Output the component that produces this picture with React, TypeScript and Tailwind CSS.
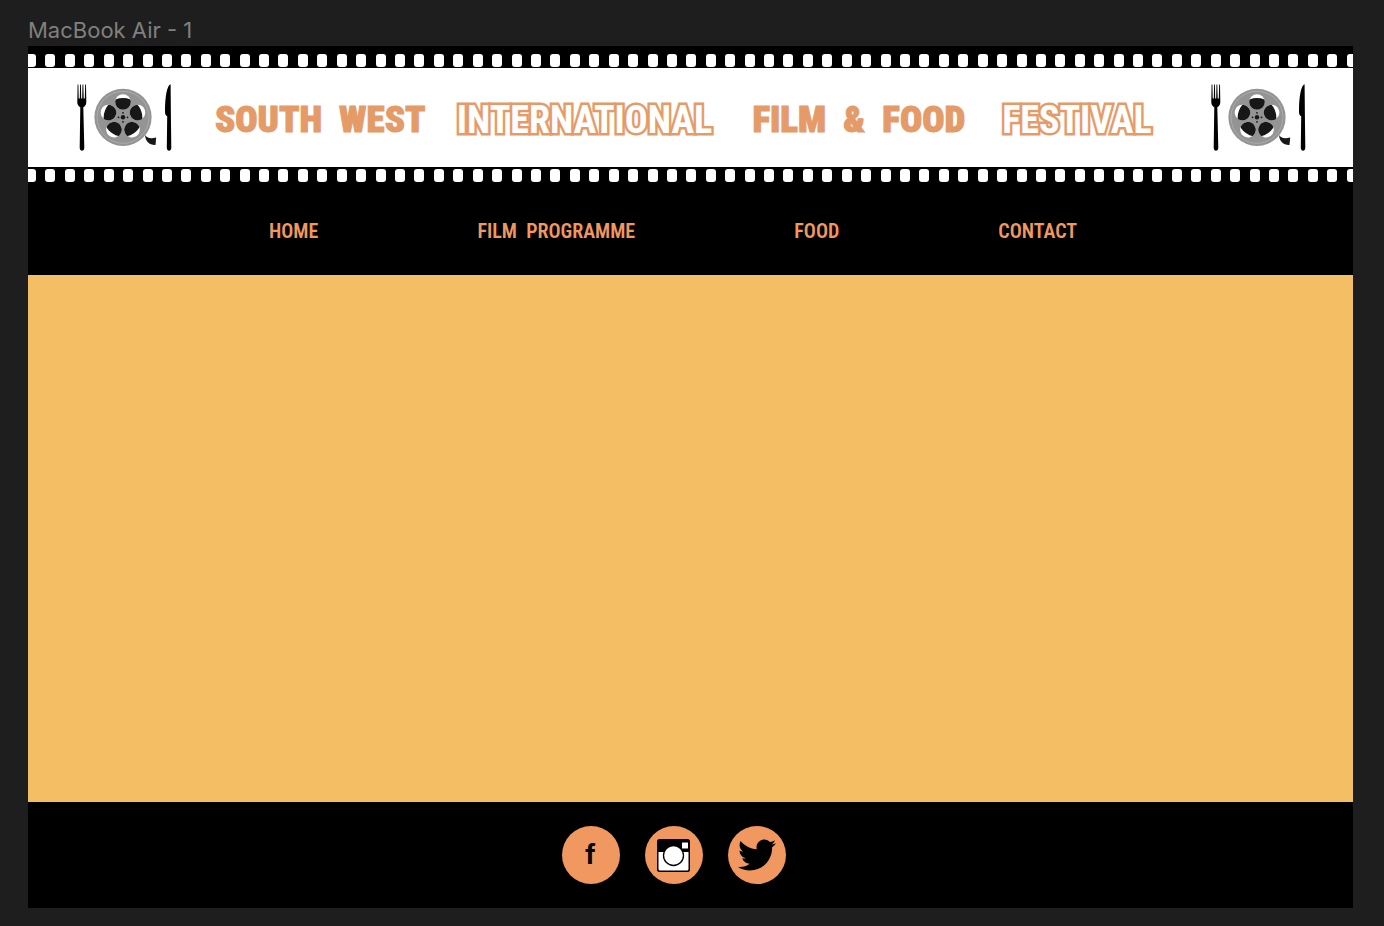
import { useId } from "react";
import { FaTwitter } from "react-icons/fa";

const HOLE_COUNT = 69;
const REEL_ANGLES = [0, 72, 144, 216, 288];
const HUB_ANGLES = [0, 90, 180, 270];

function FilmStrip() {
  return (
    <div className="overflow-hidden" aria-hidden="true">
      <div className="-mr-1 -ml-[2px] flex justify-between">
        {Array.from({ length: HOLE_COUNT }, (_, i) => (
          <span key={i} className="h-[13px] w-[10px] shrink-0 rounded-[3px] bg-white" />
        ))}
      </div>
    </div>
  );
}

function FestivalMark() {
  const clipId = useId();
  return (
    <svg viewBox="0 0 96 68" className="h-[68px] w-24" role="img" aria-label="Fork, film reel and knife">
      <path
        d="M1.600 .5 1.300 18c0 3 1.300 4.200 3 5.200L3.700 63.500c0 4.300 4.600 4.300 4.600 0L7.300 23.200c1.700-1 3-2.200 3-5.200L10 .5h-.8L8.800 14.500H7.700L7.300.5h-.8L6.200 14.500H5.200L4.900.5h-.8L3.800 14.500H2.700L2.400.5z"
        fill="#000"
      />
      <circle cx="47" cy="33.300" r="28.600" fill="#949494" />
      <circle cx="47" cy="33.300" r="26" fill="none" stroke="#ababab" strokeWidth="1" />
      <clipPath id={clipId}>
        <circle cx="47" cy="33.300" r="19.300" />
      </clipPath>
      <g fill="#fff">
        {REEL_ANGLES.map((angle) => (
          <circle key={angle} cx="47" cy="18" r="7.800" transform={`rotate(${angle} 47 33.3)`} />
        ))}
      </g>
      <g fill="#171717" clipPath={`url(#${clipId})`}>
        {REEL_ANGLES.map((angle) => (
          <circle key={angle} cx="47" cy="18" r="7.800" transform={`rotate(${angle} 47 33.3)`} />
        ))}
      </g>
      <circle cx="47" cy="33.300" r="2.200" fill="#171717" />
      <g fill="#171717">
        {HUB_ANGLES.map((angle) => (
          <circle key={angle} cx="47" cy="28.800" r=".9" transform={`rotate(${angle} 47 33.3)`} />
        ))}
      </g>
      <path d="M69 51c1.500 2.700 5.500 4.200 11.200 2.400L79.500 61c-6 .3-10-3.500-10.500-10z" fill="#171717" />
      <path d="M94.600.3c-3.500 1-5.600 12-5.600 27 0 3 .5 4.300 2.200 5L90.800 63.500c0 4.300 4.500 4.300 4.500 0L94.900 32z" fill="#000" />
    </svg>
  );
}

function InstagramIcon() {
  return (
    <svg viewBox="0 0 33 33" className="h-[33px] w-[33px]" aria-hidden="true">
      <rect width="33" height="33" rx="2.500" fill="#000" />
      <path d="M1.500 13h30v17a1.500 1.500 0 0 1-1.500 1.500H3A1.500 1.500 0 0 1 1.500 30z" fill="#fff" />
      <circle cx="16.500" cy="16.500" r="10" fill="#fff" stroke="#000" strokeWidth="1.300" />
      <rect x="25" y="3.500" width="6" height="6" rx=".5" fill="#fff" />
    </svg>
  );
}

const solid = "text-[37px] font-black [-webkit-text-stroke:1px_#e59b68]";
const outlined = "text-[38px] font-bold text-white [-webkit-text-stroke:5px_#e59b68] [paint-order:stroke_fill]";

const titleParts = [
  { text: "SOUTH  WEST", style: solid },
  { text: "INTERNATIONAL", style: outlined },
  { text: "FILM  &  FOOD", style: solid },
  { text: "FESTIVAL", style: outlined },
];

const links = ["HOME", "FILM  PROGRAMME", "FOOD", "CONTACT"];

const socialButton = "flex h-[58px] w-[58px] items-center justify-center rounded-full bg-[#f0985f] text-black";

export default function App() {
  return (
    <div className="flex min-h-screen flex-col bg-[#1e1e1e] pt-4 pr-[31px] pb-[18px] pl-7">
      <p className="h-[30px] font-['Inter',sans-serif] text-[22px] leading-7 text-[#808080]">MacBook Air - 1</p>
      <div className="flex flex-1 flex-col bg-black font-['Roboto_Condensed','Liberation_Sans_Narrow','Liberation_Sans',sans-serif] font-bold">
        <header>
          <div className="pt-2 pb-[1px]">
            <FilmStrip />
          </div>
          <div className="grid h-[99px] grid-cols-[139fr_242fr_296fr_250fr_208fr_96fr] items-center bg-white pr-[47px] pl-12">
            <FestivalMark />
            <h1 className="col-span-4 grid grid-cols-subgrid pt-[5px] leading-[46px] whitespace-pre text-[#e59b68]">
              {titleParts.map((part) => (
                <span key={part.text} className={part.style}>
                  {part.text}
                </span>
              ))}
            </h1>
            <FestivalMark />
          </div>
          <div className="pt-[2px]">
            <FilmStrip />
          </div>
          <nav className="flex h-[93px] items-center justify-between pt-1 pr-[276px] pl-[241px]">
            {links.map((link) => (
              <a key={link} href="#" className="text-[20px] leading-6 font-semibold whitespace-pre text-[#f0985f]">
                {link}
              </a>
            ))}
          </nav>
        </header>
        <main className="min-h-64 flex-1 bg-[#f4be64]" />
        <footer className="flex h-[106px] items-center justify-center gap-[25px] pr-[34px]">
          <a href="#" aria-label="Facebook" className={socialButton}>
            <span className="font-['Inter',sans-serif] text-[26px] leading-8 font-bold">f</span>
          </a>
          <a href="#" aria-label="Instagram" className={socialButton}>
            <InstagramIcon />
          </a>
          <a href="#" aria-label="Twitter" className={socialButton}>
            <FaTwitter className="h-[38px] w-[38px]" aria-hidden="true" />
          </a>
        </footer>
      </div>
    </div>
  );
}
